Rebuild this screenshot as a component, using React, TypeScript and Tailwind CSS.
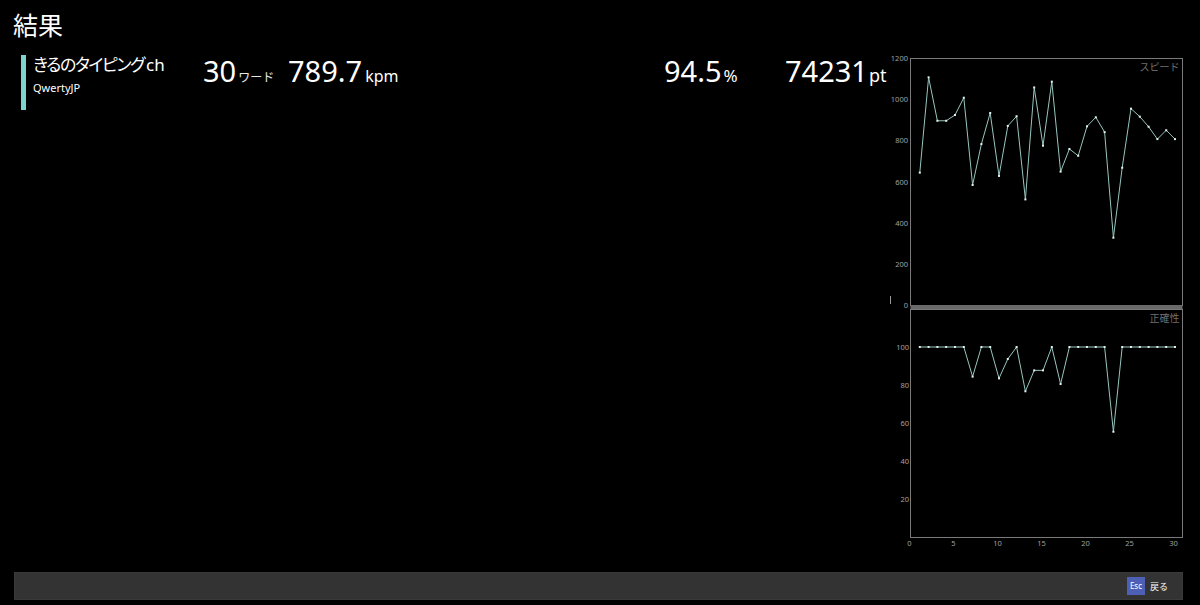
import React from "react";

const speed = [643, 1106, 895, 895, 923, 1007, 583, 782, 933, 627, 870, 917, 513, 1057, 774, 1085, 648, 758, 725, 868, 912, 840, 327, 667, 954, 915, 866, 806, 849, 806];
const acc = [100, 100, 100, 100, 100, 100, 84.4, 100, 100, 83.5, 93.7, 100, 76.7, 87.7, 87.7, 100, 80.5, 100, 100, 100, 100, 100, 55.4, 100, 100, 100, 100, 100, 100, 100];

// svg origin is page (880, 50)
const OX = 880;
const OY = 50;
const xOf = (i: number) => 911 + i * 8.8 - OX;
const LEFT = 910.5 - OX;
const RIGHT = 1182.5 - OX;

function Chart() {
  const sTop = 58 - OY;
  const sBot = 305 - OY;
  const sy = (v: number) => sBot - (v / 1200) * (sBot - sTop);
  const aTop = 309 - OY;
  const aBot = 537 - OY;
  const ay = (v: number) => aBot - (v / 120) * (aBot - aTop);
  const lineColor = "#98c6bf";
  const labelColor = "#a0a0a0";
  const font = "'Noto Sans', 'Noto Sans CJK JP', sans-serif";
  return (
    <svg width={320} height={505} className="block shrink-0">
      {/* speed chart */}
      <rect x={LEFT} y={sTop + 0.5} width={RIGHT - LEFT} height={sBot - sTop} fill="none" stroke="#7a7a7a" strokeWidth={1} />
      {[0, 200, 400, 600, 800, 1000, 1200].map((v) => (
        <text key={v} x={28} y={sy(v) + 3} fontSize={7.5} fill={labelColor} textAnchor="end" fontFamily={font}>
          {v}
        </text>
      ))}
      <text x={RIGHT - 3} y={sTop + 13} fontSize={10} fill="#6f6f6f" textAnchor="end" fontFamily={font}>
        スピード
      </text>
      <polyline
        fill="none"
        stroke={lineColor}
        strokeWidth={1}
        points={speed.map((v, i) => `${xOf(i + 1)},${sy(v)}`).join(" ")}
      />
      {speed.map((v, i) => (
        <rect key={i} x={xOf(i + 1) - 1} y={sy(v) - 1} width={2} height={2} fill="#dff2ee" />
      ))}
      <rect x={LEFT} y={255} width={RIGHT - LEFT} height={4} fill="#6a6a6a" />
      <line x1={10.5} y1={246} x2={10.5} y2={254} stroke="#9a9a9a" strokeWidth={1} />

      {/* accuracy chart */}
      <rect x={LEFT} y={aTop + 0.5} width={RIGHT - LEFT} height={aBot - aTop} fill="none" stroke="#7a7a7a" strokeWidth={1} />
      {[20, 40, 60, 80, 100].map((v) => (
        <text key={v} x={29} y={ay(v) + 3} fontSize={7.5} fill={labelColor} textAnchor="end" fontFamily={font}>
          {v}
        </text>
      ))}
      <text x={RIGHT - 3} y={aTop + 13} fontSize={10} fill="#6f6f6f" textAnchor="end" fontFamily={font}>
        正確性
      </text>
      <polyline
        fill="none"
        stroke={lineColor}
        strokeWidth={1}
        points={acc.map((v, i) => `${xOf(i + 1)},${ay(v)}`).join(" ")}
      />
      {acc.map((v, i) => (
        <rect key={i} x={xOf(i + 1) - 1} y={ay(v) - 1} width={2} height={2} fill="#dff2ee" />
      ))}
      {[0, 5, 10, 15, 20, 25, 30].map((v) => (
        <text key={v} x={xOf(v) - 1.5} y={aBot + 9} fontSize={7.5} fill={labelColor} textAnchor="middle" fontFamily={font}>
          {v}
        </text>
      ))}
    </svg>
  );
}

export default function App() {
  return (
    <div
      className="w-[1200px] h-[605px] bg-black text-white flex flex-col overflow-hidden"
      style={{ fontFamily: "'Noto Sans', 'Noto Sans CJK JP', sans-serif" }}
    >
      <div className="pl-[13px] pt-[8px] h-[50px] text-[25px] leading-[34px]">結果</div>
      <div className="flex items-start">
        <div className="w-[203px] pl-[21px] pt-[5px] flex shrink-0">
          <div className="w-[5px] h-[55px] bg-[#7dd3cd]" />
          <div className="ml-[7px] flex flex-col">
            <div className="text-[17px] leading-[24px] -mt-[2px] [font-feature-settings:'palt'] whitespace-nowrap">
              <span className="tracking-[-1.4px]">きるのタイピング</span>
              <span className="ml-[2px]">ch</span>
            </div>
            <div className="text-[11px] leading-[14px] mt-[4px]">QwertyJP</div>
          </div>
        </div>
        <div className="flex items-baseline pt-[6px] leading-none">
          <div className="w-[85px] flex items-baseline">
            <span className="text-[29px]">30</span>
            <span className="text-[12px] ml-[2px] text-[#e8e8e8]">ワード</span>
          </div>
          <div className="w-[376px] flex items-baseline">
            <span className="text-[29px]">789.7</span>
            <span className="text-[16px] ml-[3px]">kpm</span>
          </div>
          <div className="w-[121px] flex items-baseline">
            <span className="text-[29px]">94.5</span>
            <span className="text-[17px] ml-[2px]">%</span>
          </div>
          <div className="w-[95px] flex items-baseline">
            <span className="text-[29px]">74231</span>
            <span className="text-[18px] ml-[1px]">pt</span>
          </div>
        </div>
        <Chart />
      </div>
      <div className="mt-auto mb-[5px] ml-[14px] w-[1169px] h-[28px] bg-[#333333] border border-[#3a3a3a] flex items-center justify-end pr-[14px]">
        <div className="w-[18px] h-[18px] bg-[#4e60b6] flex items-center justify-center text-[8px] leading-none">Esc</div>
        <div className="ml-[5px] text-[9px] leading-none">戻る</div>
      </div>
    </div>
  );
}
